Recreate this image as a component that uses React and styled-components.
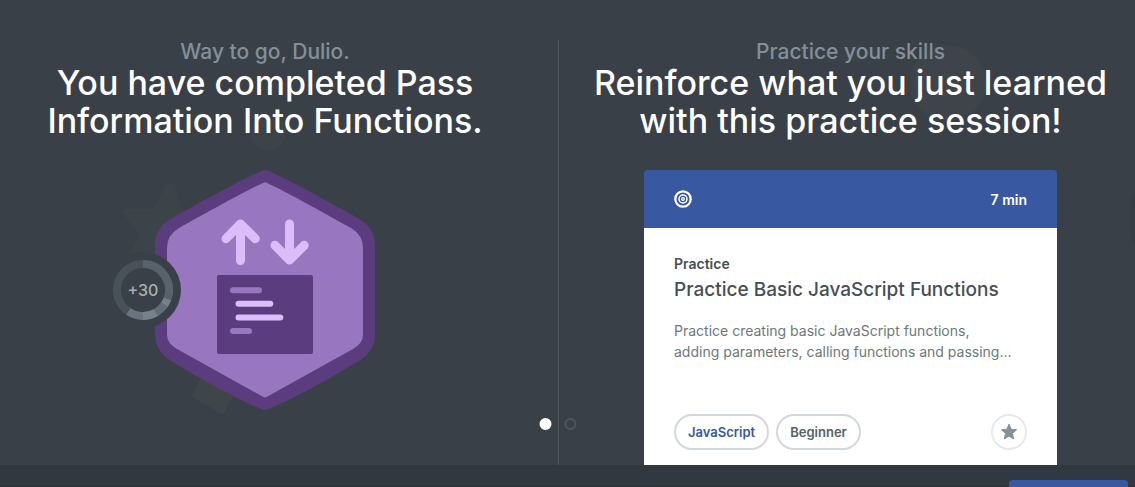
import React from "react";
import styled, { createGlobalStyle } from "styled-components";

const c = {
  bg: "#394047",
  footer: "#32383f",
  line: "#4f575e",
  muted: "#848f99",
  blue: "#3859a1",
  ink: "#464f53",
  body: "#6d787c",
  plum: "#5b3c7e",
  violet: "#9877c0",
  lilac: "#dcbdf9",
};

const GlobalStyle = createGlobalStyle`
  * { box-sizing: border-box; }
  body {
    margin: 0;
    background: ${c.bg};
    font-family: Inter, "Liberation Sans", sans-serif;
    overflow: hidden;
  }
  button { font: inherit; padding: 0; cursor: pointer; }
`;

const Page = styled.div`
  display: flex;
  flex-direction: column;
  height: 100vh;
  overflow: hidden;
`;

const Stage = styled.main`
  flex: 1;
  min-height: 0;
  display: grid;
  grid-template-columns: 558fr 577fr;
  padding-top: 40px;
  position: relative;
`;

const Panel = styled.section`
  position: relative;
  display: flex;
  flex-direction: column;
  align-items: center;
  min-width: 0;
  padding: ${(p) => (p.$divided ? "0 0 0 7px" : "0 28px 0 0")};
  border-left: ${(p) => (p.$divided ? `1px solid ${c.line}` : "0")};
`;

const Decor = styled.svg`
  position: absolute;
  top: -40px;
  left: ${(p) => (p.$right ? "auto" : "0")};
  right: ${(p) => (p.$right ? "0" : "auto")};
  overflow: visible;
  pointer-events: none;
`;

const Headline = styled.header`
  position: relative;
  max-width: 540px;
  margin-bottom: 30px;
  text-align: center;
`;

const Kicker = styled.p`
  margin: 0;
  color: ${c.muted};
  font-size: 21px;
  font-weight: 500;
  line-height: 24px;
`;

const Title = styled.h1`
  margin: 0;
  color: #fff;
  font-size: 34px;
  font-weight: 500;
  line-height: 38px;
`;

const Badge = styled.div`
  position: relative;
  width: 220px;
  height: 240px;
`;

const Points = styled.div`
  position: absolute;
  left: -50px;
  top: 82px;
  width: 76px;
  height: 76px;
  border-radius: 50%;
  background: ${c.bg};
  display: grid;
  place-items: center;

  > * { grid-area: 1 / 1; }
`;

const PointsLabel = styled.span`
  color: #a9b0b5;
  font-size: 16px;
  font-weight: 500;
  line-height: 20px;
`;

const Dots = styled.nav`
  position: absolute;
  left: -1px;
  bottom: 35px;
  transform: translateX(-50%);
  display: flex;
  gap: 13px;
`;

const Dot = styled.button`
  width: 12px;
  height: 12px;
  border-radius: 50%;
  border: 2px solid ${(p) => (p.$active ? "#fff" : c.line)};
  background: ${(p) => (p.$active ? "#fff" : "transparent")};
`;

const Card = styled.article`
  position: relative;
  flex: 1;
  display: flex;
  flex-direction: column;
  width: 413px;
  max-width: 100%;
`;

const CardTop = styled.div`
  display: flex;
  align-items: center;
  justify-content: space-between;
  height: 58px;
  padding: 0 30px;
  border-radius: 4px 4px 0 0;
  background: ${c.blue};
  color: #fff;
  font-size: 14px;
  font-weight: 600;
`;

const CardBody = styled.div`
  flex: 1;
  display: flex;
  flex-direction: column;
  padding: 26px 30px 15px;
  background: #fff;
`;

const Kind = styled.p`
  margin: 0 0 4px;
  color: ${c.ink};
  font-size: 14px;
  font-weight: 600;
  line-height: 20px;
`;

const CardTitle = styled.h2`
  margin: 0;
  color: ${c.ink};
  font-size: 19px;
  font-weight: 500;
  line-height: 24px;
  white-space: nowrap;
`;

const Summary = styled.p`
  margin: 18px 0 0;
  color: ${c.body};
  font-size: 14px;
  line-height: 21px;
  white-space: nowrap;
`;

const CardFoot = styled.div`
  display: flex;
  align-items: center;
  gap: 7px;
  margin-top: auto;
`;

const Tag = styled.a`
  height: 36px;
  padding: 0 12px;
  border: 2px solid #d3d8dc;
  border-radius: 18px;
  color: ${(p) => (p.$accent ? c.blue : "#56616a")};
  font-size: 13px;
  font-weight: 600;
  line-height: 32px;
  text-decoration: none;
`;

const StarButton = styled.button`
  display: grid;
  place-items: center;
  width: 36px;
  height: 36px;
  margin-left: auto;
  border: 2px solid #e6eaec;
  border-radius: 50%;
  background: #fff;
`;

const Footer = styled.footer`
  flex: none;
  display: flex;
  justify-content: flex-end;
  align-items: flex-end;
  height: 22px;
  padding-right: 7px;
  background: ${c.footer};
  border-bottom: 1px solid #2e3235;
`;

const NextButton = styled.button`
  width: 119px;
  height: 7px;
  margin-bottom: -1px;
  border: 0;
  border-radius: 4px 4px 0 0;
  background: ${c.blue};
`;

const FunctionBadge = () => (
  <svg width="220" height="240" viewBox="155 170 220 240" role="img" aria-label="Functions badge">
    <path
      fill={c.plum}
      d="M262 170.800Q265 169.200 268 170.800C282 176 334 205 356 217Q375 227 375 245V335Q375 351 359 361C336 375 290 401 268 409.200Q265 410.800 262 409.200C240 401 194 375 171 361Q155 351 155 335V245Q155 227 174 217C196 205 248 176 262 170.800Z"
    />
    <path
      fill={c.violet}
      d="M263 183Q265 181.600 267 183C285 191 329 216 351 228Q363 235 363 248V335Q363 343 353 349L267 396.800Q265 398.200 263 396.800L177 349Q167 343 167 335V248Q167 235 179 228C201 216 245 191 263 183Z"
    />
    <g fill="none" stroke={c.lilac} strokeWidth="9" strokeLinecap="round" strokeLinejoin="round">
      <path d="M240.500 260.500V225M226 238.700L240.500 224L255.300 238.700" />
      <path d="M289.500 224V259M275 245.300L289.500 260L304.300 245.300" />
      <path strokeWidth="4" d="M237 231h7M286 253h7" />
    </g>
    <rect x="217" y="275" width="96" height="79" rx="2" fill={c.plum} />
    <g strokeWidth="6" strokeLinecap="round">
      <path stroke={c.violet} d="M233 290.300H259M233 331H249" />
      <path stroke={c.lilac} d="M238.500 303.800H270.300M238.500 317.400H280.300" />
    </g>
  </svg>
);

const RING = [
  [0, 110, "#59626b"],
  [110, 125, "#75818a"],
  [125, 150, "#626e77"],
  [150, 180, "#76828b"],
  [180, 215, "#69757e"],
  [215, 360, "#495159"],
];

const polar = (deg) => {
  const a = (deg * Math.PI) / 180;
  return `${30 + 26 * Math.sin(a)} ${30 - 26 * Math.cos(a)}`;
};

const PointsRing = () => (
  <svg width="60" height="60" viewBox="0 0 60 60" fill="none" strokeWidth="8" aria-hidden="true">
    {RING.map(([from, to, color]) => (
      <path key={from} stroke={color} d={`M${polar(from)}A26 26 0 0 1 ${polar(to)}`} />
    ))}
  </svg>
);

const TargetIcon = () => (
  <svg width="18" height="18" viewBox="0 0 18 18" fill="none" stroke="#fff" aria-hidden="true">
    <circle cx="9" cy="9" r="7.700" strokeWidth="2.300" />
    <circle cx="9" cy="9" r="4" strokeWidth="1.500" />
    <circle cx="9" cy="9" r="1.300" strokeWidth="1.300" />
  </svg>
);

const StarIcon = () => (
  <svg width="18" height="18" viewBox="0 0 18 18" aria-hidden="true">
    <path
      fill="#87919a"
      stroke="#87919a"
      strokeLinejoin="round"
      d="M9 1.200L11.200 6.200L16.500 6.800L12.500 10.400L13.700 15.900L9 13.100L4.300 15.900L5.500 10.400L1.500 6.800L6.800 6.200Z"
    />
  </svg>
);

export default function App() {
  return (
    <Page>
      <GlobalStyle />
      <Stage>
        <Panel>
          <Decor width="558" height="465" viewBox="0 0 558 465" aria-hidden="true">
            <g fill="#3d4449">
              <circle cx="268.500" cy="133" r="17.500" />
              <path d="M165 187Q170 180 175 186L182 210L210 222L183 240L180 262L158 254L134 256Q130 255 131 252L139 234L123 214Q121 209 126 209L153 209Z" />
              <path fill="#3f464a" d="M191 396L222.700 414.700L238 387L206 369Z" />
            </g>
          </Decor>
          <Headline>
            <Kicker>Way to go, Dulio.</Kicker>
            <Title>
              You have completed Pass
              <br />
              Information Into Functions.
            </Title>
          </Headline>
          <Badge>
            <FunctionBadge />
            <Points>
              <PointsRing />
              <PointsLabel>+30</PointsLabel>
            </Points>
          </Badge>
        </Panel>
        <Panel $divided>
          <Decor $right width="577" height="465" viewBox="558 0 577 465" aria-hidden="true">
            <circle cx="948" cy="83" r="38" fill="#3e4449" />
            <path d="M842 41L861 42L860 61L841 60Z" fill="#3b4248" />
            <path d="M1135 192Q1123 218 1135 246Z" fill="#363d44" />
          </Decor>
          <Headline>
            <Kicker>Practice your skills</Kicker>
            <Title as="h2">
              Reinforce what you just learned
              <br />
              with this practice session!
            </Title>
          </Headline>
          <Card>
            <CardTop>
              <TargetIcon />
              <span>7 min</span>
            </CardTop>
            <CardBody>
              <Kind>Practice</Kind>
              <CardTitle>Practice Basic JavaScript Functions</CardTitle>
              <Summary>
                Practice creating basic JavaScript functions,
                <br />
                adding parameters, calling functions and passing...
              </Summary>
              <CardFoot>
                <Tag href="#javascript" $accent>JavaScript</Tag>
                <Tag href="#beginner">Beginner</Tag>
                <StarButton type="button" aria-label="Save">
                  <StarIcon />
                </StarButton>
              </CardFoot>
            </CardBody>
          </Card>
          <Dots aria-label="Slides">
            <Dot type="button" $active aria-label="Slide 1" />
            <Dot type="button" aria-label="Slide 2" />
          </Dots>
        </Panel>
      </Stage>
      <Footer>
        <NextButton type="button" aria-label="Next" />
      </Footer>
    </Page>
  );
}
